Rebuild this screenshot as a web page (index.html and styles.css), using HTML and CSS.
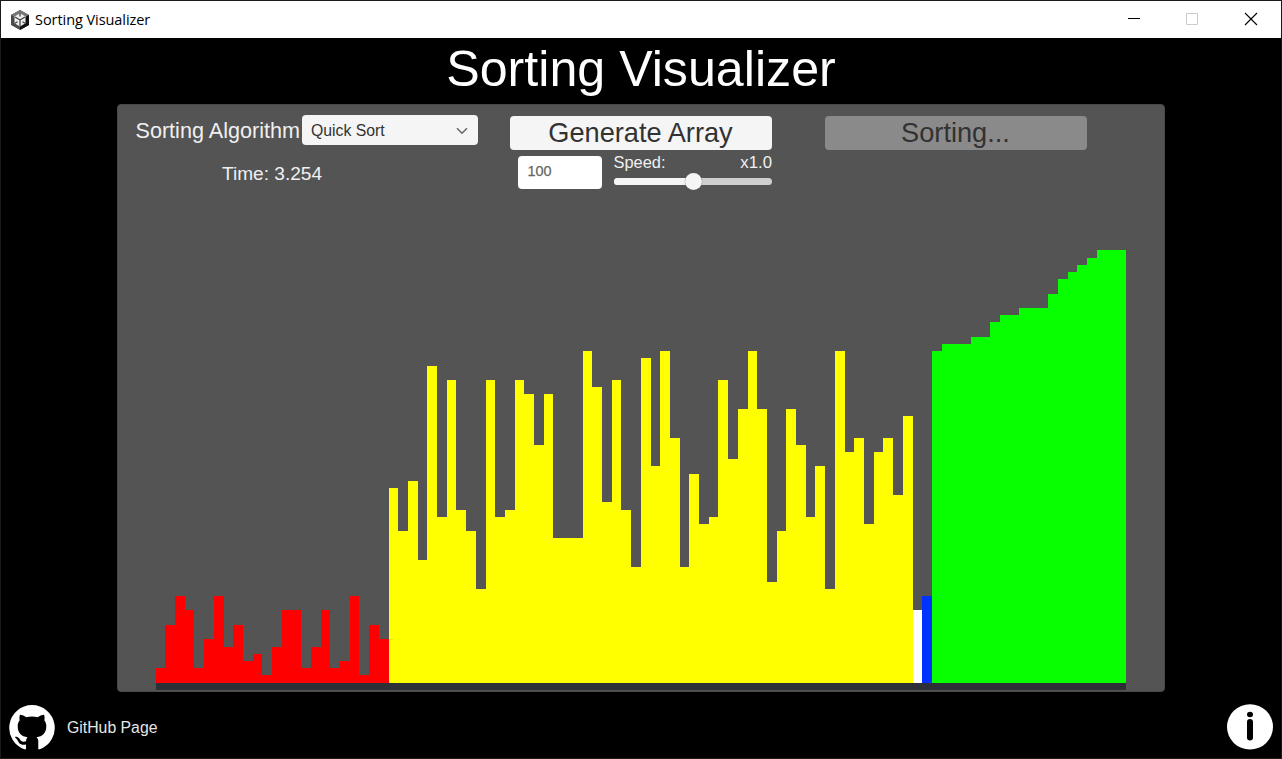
FILE: index.html
```html
<!DOCTYPE html>
<html lang="en">
<head>
<meta charset="utf-8">
<title>Sorting Visualizer</title>
<link rel="stylesheet" href="styles.css">
</head>
<body>
<div class="window">
  <header class="titlebar">
    <svg class="app-icon" viewBox="0 0 18 20">
      <path d="M9 0 18 5v10l-9 5-9-5V5z" fill="#4a4a4a"/>
      <path d="M9 0 18 5 9 10 0 5z" fill="#777"/>
      <path d="M18 5v10l-9 5V10z" fill="#111"/>
      <path d="M9 3.2 14.5 6.5v6.8L9 16.6l-5.500-3.300V6.500z" fill="#eee"/>
      <path d="M9 10V16M9 10 4 7M9 10l5-3M9 3v3.500M3.500 13.500l3-1.700M14.500 13.500l-3-1.700" stroke="#444" stroke-width="1.300" fill="none"/>
    </svg>
    <span class="app-name">Sorting Visualizer</span>
    <div class="controls">
      <svg viewBox="0 0 12 12" class="control"><path d="M0 5.500h12" stroke="#000"/></svg>
      <svg viewBox="0 0 12 12" class="control"><path d="M.5.5h11v11H.5z" stroke="#ccc" fill="none"/></svg>
      <svg viewBox="0 0 12 12" class="control close"><path d="M0 0l12 12M12 0 0 12" stroke="#000" stroke-width="1.100"/></svg>
    </div>
  </header>
  <main class="game">
    <h1 class="title">Sorting Visualizer</h1>
    <section class="panel">
      <div class="toolbar">
        <div class="algo">
          <div class="algo-row">
            <span class="algo-label">Sorting Algorithm</span>
            <div class="select">
              <span>Quick Sort</span>
              <svg class="chevron" viewBox="0 0 12 8"><path d="M1 1.200 6 6.300l5-5.100" fill="none" stroke="#666" stroke-width="1.500"/></svg>
            </div>
          </div>
          <div class="time">Time: 3.254</div>
        </div>
        <div class="generate">
          <div class="button">Generate Array</div>
          <div class="options">
            <div class="input">100</div>
            <div class="speed">
              <div class="speed-text"><span>Speed:</span><span class="speed-value">x1.0</span></div>
              <div class="slider"><div class="fill"></div><div class="knob"></div></div>
            </div>
          </div>
        </div>
        <div class="button disabled">Sorting...</div>
      </div>
      <div class="chart" id="chart"></div>
      <div class="base"></div>
    </section>
    <footer class="footer">
      <svg class="github" viewBox="0 0 46 45"><path fill="#fff" d="M23 0A23 22.800 0 0 0 15.300 44.200H17V39.500C11 40.500 10 38 8.700 35.500 8 34 6.500 33 5.800 31.800 9.500 31.300 10.500 34 12 35.800 13.500 37 15.500 36.800 17 36.300 17.200 34.500 17.500 33.500 18.500 32.300 12.500 31.500 8.700 28 8.700 21.300 8.700 18.800 9.400 16.800 10.700 15.200 10.200 13.300 10.300 11.300 11 9.700 13.200 9.800 15.300 11 17.200 12.200 21 11.200 25 11.200 28.800 12.200 30.700 11 32.800 9.800 35 9.700 35.700 11.300 35.800 13.300 35.300 15.200 36.600 16.800 37.300 18.800 37.300 21.300 37.300 28 33.500 31.500 27.500 32.300 28.800 33.500 29.300 34.500 29.300 37V44.200H30.700A23 22.800 0 0 0 23 0Z"/></svg>
      <span class="github-text">GitHub Page</span>
      <svg class="info" viewBox="0 0 46 45"><ellipse cx="23" cy="21.900" rx="23" ry="22.700" fill="#fff"/><ellipse cx="23" cy="9.500" rx="3" ry="2.700"/><rect x="20" y="14" width="6" height="21.500" rx="3"/></svg>
    </footer>
  </main>
</div>
<script src="bars.js"></script>
</body>
</html>
```
FILE: styles.css
```css
* { box-sizing: border-box; }
body { margin: 0; background: #000; font-family: "Liberation Sans", Arial, sans-serif; }
.window { width: 1282px; height: 759px; border: 1px solid #1b1a1b; display: flex; flex-direction: column; overflow: hidden; background: #000; }
.titlebar { height: 37px; flex: none; background: #fff; display: flex; align-items: center; padding-left: 10px; }
.app-icon { width: 18px; height: 20px; }
.app-name { margin-left: 6px; font: 14.5px/20px "Open Sans", "Noto Sans", sans-serif; letter-spacing: -.06px; color: #000; white-space: nowrap; }
.controls { margin-left: auto; display: flex; gap: 46px; padding: 0 24px 1px 0; }
.control { width: 12px; height: 12px; overflow: visible; }
.close { margin-left: 1px; }
.game { flex: 1; display: flex; flex-direction: column; }
.title { margin: 0; height: 66px; font-size: 50.2px; line-height: 62px; font-weight: 400; color: #fff; text-align: center; white-space: nowrap; }
.panel { width: 1047.5px; height: 588px; margin-left: 116px; background: #545454; border: 1px solid #484848; border-radius: 4px; display: flex; flex-direction: column; flex: none; }
.toolbar { display: flex; height: 100px; flex: none; padding-top: 11px; color: #f0f0f0; }
.algo { width: 375px; padding-left: 17.5px; margin-right: 17px; margin-top: -1px; }
.algo-row { display: flex; align-items: center; height: 30px; white-space: nowrap; }
.algo-label { width: 166.5px; font-size: 21.6px; padding-top: 2px; }
.select { width: 176px; height: 30px; background: #f5f5f5; border-radius: 4px; color: #323232; font-size: 15.8px; display: flex; align-items: center; justify-content: space-between; padding: 1px 10px 0 9px; }
.chevron { width: 12px; height: 8px; }
.time { width: 273px; text-align: center; font-size: 19.1px; line-height: 24px; margin-top: 17px; }
.generate { width: 262px; margin-right: 53px; }
.button { width: 262px; height: 34px; padding-right: 1px; background: #f5f5f5; border-radius: 4px; color: #323232; font-size: 27.2px; line-height: 34px; text-align: center; white-space: nowrap; }
.disabled { background: #8a8a8a; }
.options { display: flex; padding: 6.4px 0 0 8px; }
.input { width: 84.5px; height: 33px; background: #fff; border-radius: 4px; font-size: 14.4px; line-height: 16px; padding: 6.5px 9.5px; color: #666; -webkit-text-stroke: .25px #666; }
.speed { width: 160.5px; margin-left: 12px; margin-top: -4.4px; }
.speed-text { display: flex; justify-content: space-between; align-items: baseline; font-size: 16.4px; line-height: 20px; }
.speed-value { font-size: 16.8px; }
.slider { position: relative; width: 158px; height: 7px; border-radius: 4px; margin: 5px 0 0 .5px; background: #cfcfcf; }
.fill { width: 50%; height: 100%; border-radius: 4px 0 0 4px; background: #f5f5f5; }
.knob { position: absolute; left: 70.500px; top: -5px; width: 17px; height: 17px; border-radius: 50%; background: #f5f5f5; box-shadow: 0 0 1px #444; }
.chart { height: 477.5px; width: 970.9px; margin-left: 37.67px; display: flex; align-items: flex-end; flex: none; }
.bar { flex: 1 1 0; min-width: 0; }
.red { background: #f00; }
.yellow { background: #ff0; }
.white { background: #fff; }
.blue { background: #0032ff; }
.green { background: #08ff00; }
.base { width: 970.5px; height: 7px; flex: none; margin-left: 37.67px; background: #2d3037; }
.footer { display: flex; align-items: center; padding: 0 8px; margin-top: 13px; height: 45px; color: #e6e6e6; }
.github, .info { width: 46px; height: 45px; display: block; }
.github-text { margin-left: 12px; font-size: 15.8px; }
.info { margin-left: auto; overflow: visible; }
```
FILE: bars.js
```js
const unit = 7.203;
const groups = [
  ["red", [2,8,12,10,2,6,12,5,8,3,4,1,5,10,10,2,5,10,2,3,12,1,8,6]],
  ["yellow", [27,21,28,17,44,23,42,24,21,13,42,23,24,42,40,33,40,20,20,20,46,41,25,42,24,16,45,30,
    46,34,16,29,22,23,42,31,38,46,38,14,21,38,33,23,30,13,46,32,34,22,32,34,26,37]],
  ["white", [10]],
  ["blue", [12]],
  ["green", [46,47,47,47,48,48,50,51,51,52,52,52,54,56,57,58,59,60,60,60]]
];
const chart = document.getElementById("chart");
for (const [color, values] of groups) {
  for (const value of values) {
    const bar = document.createElement("div");
    bar.className = "bar " + color;
    bar.style.height = value * unit + "px";
    chart.appendChild(bar);
  }
}
```
